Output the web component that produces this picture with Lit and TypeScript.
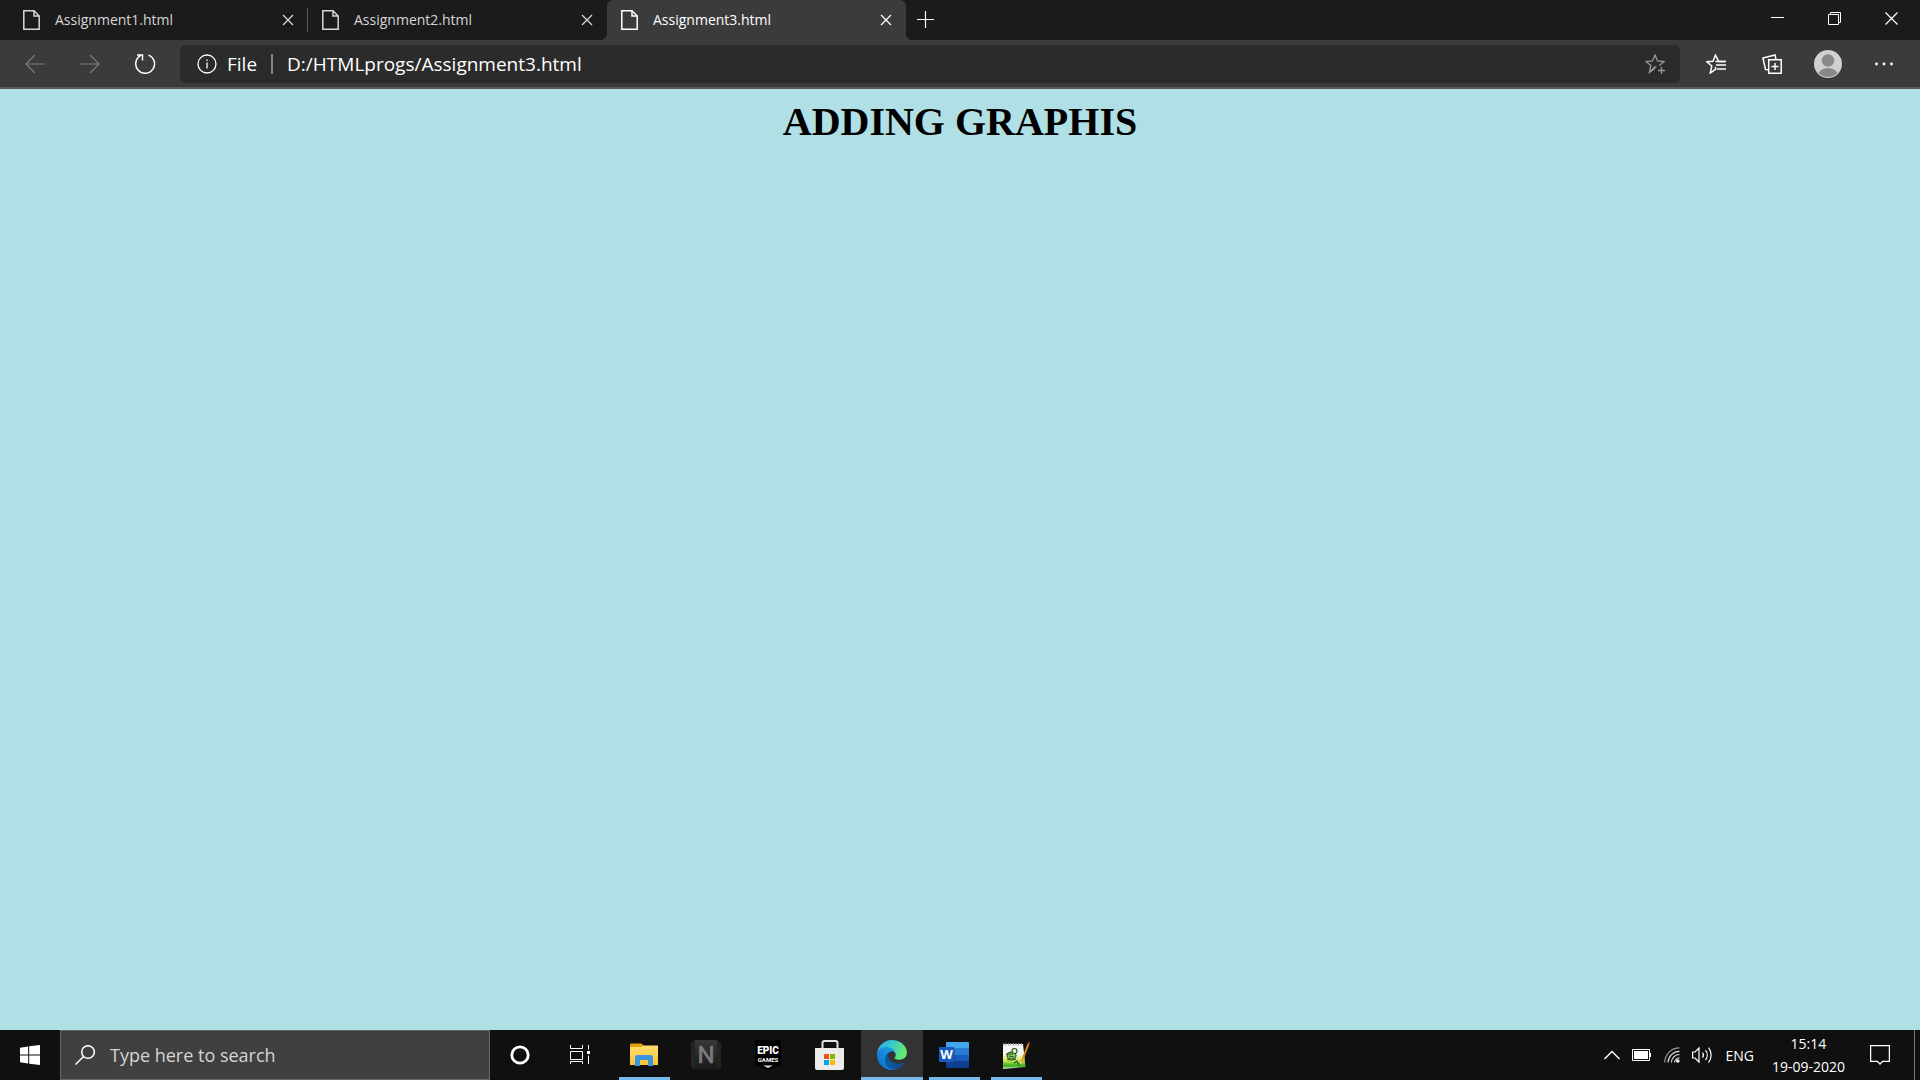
import { LitElement, html, css, svg, nothing } from "lit";
import { customElement, property, state } from "lit/decorators.js";
import { classMap } from "lit/directives/class-map.js";

const stroke = (w: number, h: number, body: unknown, width = 1.4) => html`
  <svg width=${w} height=${h} viewBox="0 0 ${w} ${h}" fill="none" stroke="currentColor" stroke-width=${width} aria-hidden="true">${body}</svg>`;

const pageIcon = stroke(17, 20, svg`<path d="M.8.8H11l5.2 5.2v13.2H.8z"/><path d="M11 .8V6h5.2"/>`, 1.5);
const closeIcon = stroke(12, 12, svg`<path d="M1 1l10 10M11 1L1 11"/>`, 1.3);
const plusIcon = stroke(17, 17, svg`<path d="M8.5 0v17M0 8.5h17"/>`, 1.2);
const minimizeIcon = stroke(13, 13, svg`<path d="M0 5.5h13"/>`, 1);
const restoreIcon = stroke(13, 13, svg`<path d="M.5 2.5h10v10H.5zM2.5 2.5v-2h10v10h-2"/>`, 1);
const windowCloseIcon = stroke(13, 13, svg`<path d="M.5.5l12 12M12.5.5l-12 12"/>`, 1.2);
const backIcon = stroke(20, 20, svg`<path d="M20 10H1M10 1L1 10l9 9"/>`, 1.2);
const forwardIcon = stroke(20, 20, svg`<path d="M0 10h19M10 1l9 9-9 9"/>`, 1.2);
const reloadIcon = stroke(22, 22, svg`<path d="M14.5 2.100a9.400 9.400 0 1 1-8 .6M3 2h5.5v5.5"/>`, 1.5);
const infoIcon = stroke(20, 20, svg`<circle cx="10" cy="10" r="9"/><path d="M10 8.5v6M10 5.5v1.600"/>`, 1.3);
const addStarIcon = stroke(20, 20, svg`<path d="M11.5 13.300L10 12.800 4.400 18.5 5.800 11.600 1 7.5l6.5-.5L10 1l2.500 6 6.500.5-4.600 4"/><path d="M4.200 18.500L10 14.500M16.500 13v7M13 16.500h7"/>`, 1.3);
const favouritesIcon = stroke(20, 20, svg`<path d="M19 7.500h-6.300L9.500 1 7 7.200.8 7.700l5 4.300-1.500 7 5.200-3.700V13"/><path d="M10 11h10M11 15h9M9.500 7.500H20"/>`, 1.5);
const collectionsIcon = stroke(20, 20, svg`<path d="M6.700 5.700h12.500v13.500H6.700zM13 9v7M9.500 12.500h7"/><path d="M14 5.500L13 1 .9 4l2.600 11.500 3 .2"/>`, 1.5);
const avatarIcon = html`
  <svg width="28" height="28" viewBox="0 0 28 28" aria-hidden="true">
    <defs><clipPath id="face"><circle cx="14" cy="14" r="13"/></clipPath></defs>
    <circle cx="14" cy="14" r="14" fill="#d2d0ce"/>
    <g clip-path="url(#face)" fill="#8a8886"><circle cx="14" cy="10.500" r="6.200"/><ellipse cx="14" cy="25.500" rx="10" ry="7.500"/></g>
  </svg>`;
const moreIcon = html`
  <svg width="18" height="4" viewBox="0 0 18 4" fill="currentColor" aria-hidden="true">
    <circle cx="1.500" cy="2" r="1.400"/><circle cx="9" cy="2" r="1.400"/><circle cx="16.500" cy="2" r="1.400"/>
  </svg>`;

const startIcon = html`
  <svg width="20" height="20" viewBox="0 0 20 20" fill="#fff" aria-hidden="true">
    <path d="M0 2.700l8.200-1.200v8H0zM9.200 1.300L20 0v9.500H9.200zM0 10.500h8.200v8L0 17.300zM9.200 10.500H20V20L9.200 18.700z"/>
  </svg>`;
const searchIcon = stroke(20, 20, svg`<circle cx="13" cy="7" r="6.300"/><path d="M8.500 11.500L.5 19.500"/>`, 1.5);
const cortanaIcon = stroke(20, 20, svg`<circle cx="10" cy="10" r="8.200"/>`, 2.8);
const taskViewIcon = stroke(20, 20, svg`<path d="M.5 0v3.500h12V0M.5 6.500h12v8H.5zM.5 19v-2.500h12V19M18.500 0v4.500M18.500 10.500V19"/><path fill="currentColor" stroke="none" d="M17 6h3v3h-3z"/>`, 1);

const explorerIcon = html`
  <svg width="28" height="24" viewBox="0 0 28 24" aria-hidden="true">
    <defs><linearGradient id="folder" x2="0" y2="1"><stop stop-color="#ffdc6e"/><stop offset="1" stop-color="#fbc435"/></linearGradient></defs>
    <path d="M0 1.500Q0 .5 1 .5h10.500L14 3v3H0z" fill="#e0a008"/>
    <path d="M0 4h11l2.500-1.500H28V22H0z" fill="url(#folder)"/>
    <path d="M5 23V14q0-2 2-2h14q2 0 2 2v9h-5v-6h-8v6z" fill="#3a93dc"/>
  </svg>`;
const nIcon = html`
  <svg width="30" height="30" viewBox="0 0 30 30" aria-hidden="true">
    <defs><linearGradient id="dark" x2="0" y2="1"><stop stop-color="#383838"/><stop offset="1" stop-color="#181818"/></linearGradient></defs>
    <path d="M4 0h22l4 3v24l-4 3H4l-4-3V3z" fill="#242424"/><path d="M4 0h22v30H4z" fill="url(#dark)"/>
    <text x="15" y="23" text-anchor="middle" font-family="Roboto, sans-serif" font-size="24" fill="#7c7c7c" stroke="#7c7c7c" stroke-width=".6">N</text>
  </svg>`;
const epicIcon = html`
  <svg width="26" height="30" viewBox="0 0 26 30" aria-hidden="true">
    <path d="M2 0h22q2 0 2 2v23l-13 5-13-5V2q0-2 2-2z" fill="#000"/>
    <text x="13" y="14" text-anchor="middle" font-family="Roboto, sans-serif" font-weight="900" font-size="10" fill="#fff">EPIC</text>
    <text x="13" y="22" text-anchor="middle" font-family="Roboto, sans-serif" font-weight="700" font-size="6" fill="#fff">GAMES</text>
    <path d="M8 25.500h10L13 28z" fill="#ddd"/>
  </svg>`;
const storeIcon = html`
  <svg width="30" height="30" viewBox="0 0 30 30" aria-hidden="true">
    <path d="M7.500 9V3q0-2 2-2h11q2 0 2 2v6" fill="none" stroke="#e4e4e4" stroke-width="2"/>
    <path d="M0 8h29v20q0 2-2 2H2q-2 0-2-2z" fill="#ececec"/>
    <path d="M9 14h5v5H9z" fill="#f25022"/><path d="M15 14h5v5h-5z" fill="#7fba00"/>
    <path d="M9 20h5v5H9z" fill="#00a4ef"/><path d="M15 20h5v5h-5z" fill="#ffb900"/>
  </svg>`;
const edgeIcon = html`
  <svg width="30" height="30" viewBox="0 0 256 256" aria-hidden="true">
    <defs>
      <linearGradient id="e1" x1="0" x2="1"><stop stop-color="#0c59a4"/><stop offset="1" stop-color="#114a8b"/></linearGradient>
      <linearGradient id="e2" x1=".8" y1=".2" x2=".2" y2="1"><stop stop-color="#1b9de2"/><stop offset="1" stop-color="#0b70cc"/></linearGradient>
      <linearGradient id="e3" x1="0" x2="1" y2=".3"><stop stop-color="#2ba9e6"/><stop offset=".5" stop-color="#36c6cf"/><stop offset="1" stop-color="#66eb6e"/></linearGradient>
    </defs>
    <path fill="url(#e1)" d="M231 190a94 94 0 0 1-11 5 102 102 0 0 1-36 6c-47 0-89-32-89-74a31 31 0 0 1 17-28c-43 2-54 47-54 73 0 74 69 82 83 82 8 0 20-2 27-5h2a128 128 0 0 0 65-52 4 4 0 0 0-4-7z"/>
    <path fill="url(#e2)" d="M106 241a79 79 0 0 1-23-21 81 81 0 0 1 29-121c3-1 8-4 16-4a33 33 0 0 1 26 13 33 33 0 0 1 6 19c0 0 25-80-80-80C36 47 0 89 0 126a130 130 0 0 0 12 57 128 128 0 0 0 156 67 75 75 0 0 1-62-9z"/>
    <path fill="url(#e3)" d="M152 149c-1 1-3 2-3 5 0 3 2 5 4 7 14 10 41 8 41 8a59 59 0 0 0 30-8 61 61 0 0 0 31-53c0-22-8-37-11-43C223 24 177 0 128 0A128 128 0 0 0 0 126c0-36 37-66 80-66 4 0 24 0 42 10 16 8 25 18 31 29 6 11 7 25 7 30 0 6-3 14-8 20z"/>
  </svg>`;
const wordIcon = html`
  <svg width="30" height="28" viewBox="0 0 30 28" aria-hidden="true">
    <path d="M7 2q0-1 1-1h21q1 0 1 1v5H7z" fill="#41a5ee"/><path d="M7 7h23v7H7z" fill="#2b7cd3"/>
    <path d="M7 14h23v6H7z" fill="#185abd"/><path d="M7 20h23v6q0 1-1 1H8q-1 0-1-1z" fill="#103f91"/>
    <path d="M7 8h9v14H7z" fill="#103f91" opacity=".5"/>
    <rect y="6" width="15" height="15" rx="1" fill="#185abd"/>
    <text x="7.500" y="18" text-anchor="middle" font-family="'Open Sans', sans-serif" font-weight="700" font-size="13" fill="#fff">W</text>
  </svg>`;
const notepadIcon = html`
  <svg width="30" height="30" viewBox="0 0 30 30" aria-hidden="true">
    <defs><linearGradient id="pad" x2="0" y2="1"><stop offset=".4" stop-color="#f5f5f2"/><stop offset=".65" stop-color="#d2ea5a"/><stop offset=".88" stop-color="#35aa1c"/><stop offset="1" stop-color="#e4eedb"/></linearGradient></defs>
    <path d="M2 4h20l2.500 23L2 29z" fill="url(#pad)"/>
    <path d="M2 4.500h20" stroke="#aaa" stroke-width="2.500" stroke-dasharray="1 1.500"/>
    <g fill="none" stroke="#25511d" stroke-width="1.100">
      <ellipse cx="10.500" cy="15.500" rx="4.500" ry="3.500" fill="#8ccc5a"/>
      <circle cx="13.500" cy="11" r="2.500" fill="#e6f2da"/><path d="M5 14h7M6 19q4 2 9 0M13 23l3-2 1 3h2M8 16l5 1"/>
    </g>
    <path d="M27.500 4L20.500 22" stroke="#dc8e14" stroke-width="2"/><path d="M28.400 2l-1 2.500" stroke="#993c30" stroke-width="2"/>
    <path d="M20.500 21.500l-1.200 2.500" stroke="#f2d6a2" stroke-width="1.500"/>
  </svg>`;

const chevronIcon = stroke(16, 10, svg`<path d="M.5 9L8 1.500 15.500 9"/>`, 1.4);
const batteryIcon = html`
  <svg width="20" height="12" viewBox="0 0 20 12" aria-hidden="true">
    <path d="M.5.5h17v11H.5z" fill="none" stroke="#fff"/><path d="M2 2h14v8H2zM18 4h1v4h-1z" fill="#fff"/>
  </svg>`;
const wifiIcon = html`
  <svg width="16" height="16" viewBox="0 0 16 16" fill="none" stroke="#ddd" stroke-width="1.200" aria-hidden="true">
    <path d="M.8 15.500A14.700 14.700 0 0 1 15.500.8" stroke="#999"/><path d="M4 15.500A11.500 11.500 0 0 1 15.500 4.300M7.400 15.500a8 8 0 0 1 8.100-8M10.500 15.500a5 5 0 0 1 5-4.700"/>
    <circle cx="13.800" cy="14" r="1.800" fill="#fff" stroke="none"/>
  </svg>`;
const speakerIcon = stroke(21, 18, svg`<path d="M.6 6H3l4-4v14l-4-4H.6z"/><path d="M10.500 6.500a4 4 0 0 1 0 5M13.500 4a8 8 0 0 1 0 10M16.500 1.500a12 12 0 0 1 0 15"/>`, 1.2);
const noticeIcon = stroke(20, 20, svg`<path d="M.6.6h18.800v15.800h-6.800L10 19l-2.600-2.600H.6z"/>`, 1.3);

const shared = css`
  :host, * { box-sizing: border-box; }
  button {
    display: flex;
    align-items: center;
    justify-content: center;
    flex: none;
    margin: 0;
    padding: 0;
    border: 0;
    background: none;
    color: inherit;
    font: inherit;
  }
  input {
    min-width: 0;
    margin: 0;
    padding: 0;
    border: 0;
    outline: 0;
    background: none;
    color: inherit;
    font: inherit;
  }
  svg { display: block; flex: none; }
`;

@customElement("tab-strip")
class TabStrip extends LitElement {
  @property({ attribute: false }) tabs: string[] = [];
  @state() private active = 2;

  static styles = [shared, css`
    :host {
      display: flex;
      height: 40px;
      padding-left: 9px;
      background: #1b1b1b;
      color: #fff;
      font-size: 14px;
      line-height: 18px;
    }
    .tab {
      position: relative;
      display: flex;
      align-items: center;
      flex: 0 1 299px;
      padding: 0 14px;
      color: #d6d6d6;
    }
    .tab.ruled::after {
      content: "";
      position: absolute;
      right: 0;
      top: 8px;
      width: 1px;
      height: 24px;
      background: #5a5a5a;
    }
    .tab.active {
      border-radius: 6px 6px 0 0;
      background: #3b3b3b;
      color: #fff;
    }
    .tab.active::before,
    .tab.active::after {
      content: "";
      position: absolute;
      bottom: 0;
      width: 6px;
      height: 6px;
    }
    .tab.active::before { left: -6px; background: radial-gradient(circle at 0 0, #1b1b1b 6px, #3b3b3b 6px); }
    .tab.active::after { right: -6px; background: radial-gradient(circle at 100% 0, #1b1b1b 6px, #3b3b3b 6px); }
    .label { flex: 1; justify-content: flex-start; gap: 15px; height: 40px; }
    .close { width: 12px; height: 40px; }
    .new { width: 39px; height: 39px; }
    .controls { display: flex; margin-left: auto; height: 37px; }
    .controls button { width: 57px; }
  `];

  render() {
    return html`
      ${this.tabs.map((name, i) => html`
        <div class=${classMap({ tab: true, active: i === this.active, ruled: i + 1 < this.active })}>
          <button class="label" @click=${() => (this.active = i)}>${pageIcon}<span>${name}</span></button>
          <button class="close" aria-label="Close tab">${closeIcon}</button>
        </div>`)}
      <button class="new" aria-label="New tab">${plusIcon}</button>
      <div class="controls">
        <button aria-label="Minimize">${minimizeIcon}</button>
        <button aria-label="Restore">${restoreIcon}</button>
        <button aria-label="Close">${windowCloseIcon}</button>
      </div>`;
  }
}

@customElement("tool-bar")
class ToolBar extends LitElement {
  @property() url = "";

  static styles = [shared, css`
    :host {
      display: flex;
      align-items: center;
      height: 49px;
      padding: 0 8px 0 7px;
      border-bottom: 2px solid #5c5a58;
      background: #3b3b3b;
      color: #fff;
      font-size: 19px;
    }
    .nav { width: 55px; height: 40px; }
    .nav.disabled { color: #7d7d7d; }
    .address {
      display: flex;
      align-items: center;
      flex: 1;
      height: 38px;
      margin: 0 8px;
      padding: 0 15px 0 17px;
      border-radius: 5px;
      background: #2b2b2b;
    }
    .scheme { gap: 10px; }
    .rule { width: 2px; height: 20px; margin: 0 14px; background: #858585; }
    .address input { flex: 1; }
    .star { color: #9a9a9a; }
    .tool { width: 56px; height: 40px; }
  `];

  render() {
    return html`
      <button class="nav disabled" aria-label="Back">${backIcon}</button>
      <button class="nav disabled" aria-label="Forward">${forwardIcon}</button>
      <button class="nav" aria-label="Refresh">${reloadIcon}</button>
      <div class="address">
        <button class="scheme">${infoIcon}<span>File</span></button>
        <span class="rule"></span>
        <input type="text" aria-label="Address" spellcheck="false" .value=${this.url}>
        <button class="star" aria-label="Add to favourites">${addStarIcon}</button>
      </div>
      <button class="tool" aria-label="Favourites">${favouritesIcon}</button>
      <button class="tool" aria-label="Collections">${collectionsIcon}</button>
      <button class="tool" aria-label="Profile">${avatarIcon}</button>
      <button class="tool" aria-label="Settings and more">${moreIcon}</button>`;
  }
}

interface App { name: string; icon: unknown; running?: boolean; focused?: boolean; }

const apps: App[] = [
  { name: "File Explorer", icon: explorerIcon, running: true },
  { name: "Game launcher", icon: nIcon },
  { name: "Epic Games", icon: epicIcon },
  { name: "Microsoft Store", icon: storeIcon },
  { name: "Microsoft Edge", icon: edgeIcon, running: true, focused: true },
  { name: "Word", icon: wordIcon, running: true },
  { name: "Notepad++", icon: notepadIcon, running: true },
];

@customElement("task-bar")
class TaskBar extends LitElement {
  static styles = [shared, css`
    :host {
      display: flex;
      height: 50px;
      background: #101010;
      color: #fff;
    }
    .system { width: 60px; }
    .search {
      display: flex;
      align-items: center;
      flex: 0 1 430px;
      gap: 15px;
      padding: 0 14px;
      border: 1px solid #666;
      background: #404040;
      font-size: 18px;
    }
    .search input { flex: 1; }
    .search input::placeholder { color: #d4d4d4; opacity: 1; }
    .apps { display: flex; padding-left: 3px; }
    .app { position: relative; width: 62px; }
    .app.focused { background: #333; }
    .app.running::after {
      content: "";
      position: absolute;
      left: 6px;
      right: 5px;
      bottom: 0;
      height: 3px;
      background: #76b9ed;
    }
    .app.focused::after { left: 0; right: 0; }
    .tray {
      display: flex;
      align-items: center;
      margin-left: auto;
      gap: 12px;
      font-size: 14px;
    }
    .clock {
      flex-direction: column;
      padding: 0 1px 0 6px;
      line-height: 23px;
    }
    .notices { width: 44px; height: 46px; }
    .desktop { width: 6px; height: 50px; border-left: 1px solid #777; }
  `];

  render() {
    return html`
      <button class="system" aria-label="Start">${startIcon}</button>
      <label class="search">
        ${searchIcon}
        <input type="text" aria-label="Search" placeholder="Type here to search">
      </label>
      <button class="system" aria-label="Cortana">${cortanaIcon}</button>
      <button class="system" aria-label="Task View">${taskViewIcon}</button>
      <div class="apps">
        ${apps.map((a) => html`
          <button class=${classMap({ app: true, running: !!a.running, focused: !!a.focused })}
            aria-label=${a.name} aria-current=${a.focused ? "true" : nothing}>${a.icon}</button>`)}
      </div>
      <div class="tray">
        <button aria-label="Show hidden icons">${chevronIcon}</button>
        <button aria-label="Battery">${batteryIcon}</button>
        <button aria-label="Network">${wifiIcon}</button>
        <button aria-label="Volume">${speakerIcon}</button>
        <button>ENG</button>
        <button class="clock"><span>15:14</span><span>19-09-2020</span></button>
        <button class="notices" aria-label="Notifications">${noticeIcon}</button>
        <button class="desktop" aria-label="Show desktop"></button>
      </div>`;
  }
}

@customElement("app-root")
class AppRoot extends LitElement {
  static styles = css`
    :host {
      display: flex;
      flex-direction: column;
      min-height: 100vh;
      font-family: "Open Sans", "Noto Sans", sans-serif;
    }
    .page {
      flex: 1;
      padding: 10px;
      background: #b0e0e6;
      color: #000;
      font-family: "Liberation Serif", serif;
      text-align: center;
    }
    .title { margin: 0; font-size: 40px; line-height: 46px; font-weight: 700; }
  `;

  render() {
    return html`
      <tab-strip .tabs=${["Assignment1.html", "Assignment2.html", "Assignment3.html"]}></tab-strip>
      <tool-bar url="D:/HTMLprogs/Assignment3.html"></tool-bar>
      <main class="page"><h1 class="title">ADDING GRAPHIS</h1></main>
      <task-bar></task-bar>`;
  }
}
